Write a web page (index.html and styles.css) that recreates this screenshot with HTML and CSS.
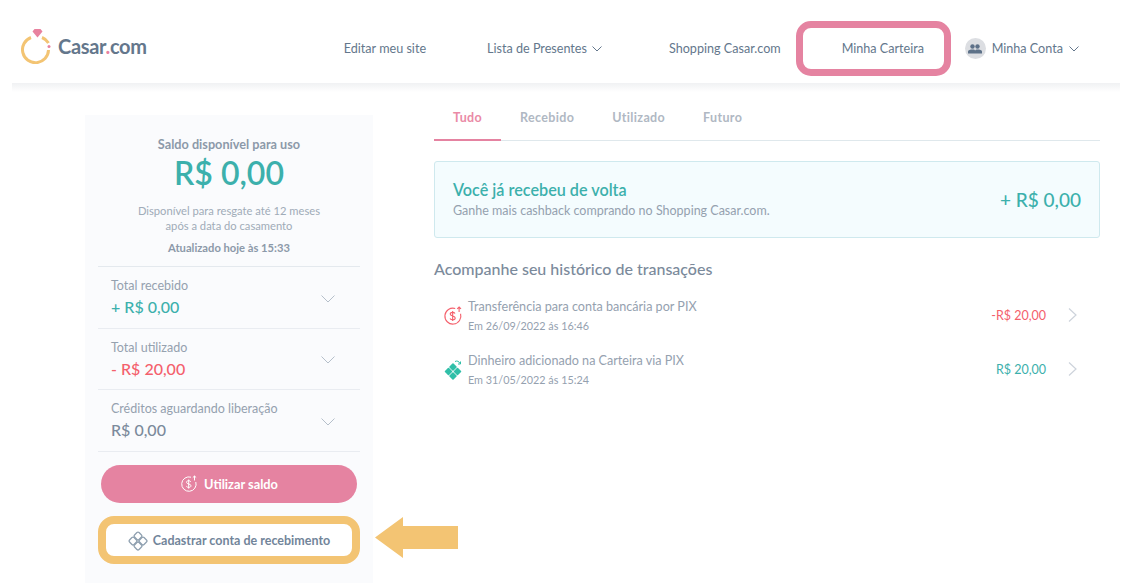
FILE: index.html
```html
<!DOCTYPE html>
<html lang="pt-BR">
  <head>
    <meta charset="UTF-8" />
    <title>Minha Carteira</title>
    <link rel="stylesheet" href="styles.css">
  </head>
  <body>
    <header class="topbar">
      <a class="logo">
        <svg width="32" height="36" viewBox="0 0 32 36">
          <path d="M10 9.5A13 13 0 1 0 27.5 22" fill="none" stroke="#f3c473" stroke-width="3" />
          <path d="M21 9.500A13 13 0 0 1 27.500 15" fill="none" stroke="#f3c473" stroke-width="3" />
          <path d="M11.500 3.500L13.500 1H19.500L21.500 3.500L16.500 9.500Z" fill="#e8829f" />
          <circle cx="28" cy="18.500" r="1.500" fill="#e8829f" />
        </svg>
        <span class="logo-text">Casar<i>.</i>com</span>
      </a>
      <nav class="nav">
        <a class="nav-link nav-edit">Editar meu site</a>
        <a class="nav-link nav-list">Lista de Presentes
          <svg class="chev-small" width="10" height="6" viewBox="0 0 10 6"><path d="M.5.5L5 5L9.500.5" /></svg>
        </a>
        <a class="nav-link nav-shop">Shopping Casar.com</a>
        <a class="nav-link nav-wallet">Minha Carteira</a>
        <a class="nav-link nav-account">
          <span class="avatar">
            <svg width="14" height="10" viewBox="0 0 14 10" fill="#5d7188">
              <circle cx="4.500" cy="2.500" r="2.200" />
              <circle cx="9.500" cy="2.500" r="2.200" />
              <path d="M0 9.500V7.500C0 6 2.500 5.500 4.500 5.500S7 6 7 6.500C7.500 6 8 5.500 9.500 5.500C11.500 5.500 14 6 14 7.500V9.500Z" />
            </svg>
          </span>
          Minha Conta
          <svg class="chev-small" width="10" height="6" viewBox="0 0 10 6"><path d="M.5.5L5 5L9.500.5" /></svg>
        </a>
      </nav>
    </header>

    <div class="content">
      <aside class="wallet">
        <div class="balance">
          <p class="balance-title">Saldo disponível para uso</p>
          <p class="balance-value">R$ 0,00</p>
          <p class="balance-note">Disponível para resgate até 12 meses<br />após a data do casamento</p>
          <p class="balance-update">Atualizado hoje às 15:33</p>
        </div>

        <div class="total-row">
          <div>
            <p class="total-label">Total recebido</p>
            <p class="total-value green">+ R$ 0,00</p>
          </div>
          <svg class="chev-big" width="14" height="8" viewBox="0 0 14 8"><path d="M.5.5L7 7L13.500.5" /></svg>
        </div>
        <div class="total-row">
          <div>
            <p class="total-label">Total utilizado</p>
            <p class="total-value red">- R$ 20,00</p>
          </div>
          <svg class="chev-big" width="14" height="8" viewBox="0 0 14 8"><path d="M.5.5L7 7L13.500.5" /></svg>
        </div>
        <div class="total-row">
          <div>
            <p class="total-label">Créditos aguardando liberação</p>
            <p class="total-value">R$ 0,00</p>
          </div>
          <svg class="chev-big" width="14" height="8" viewBox="0 0 14 8"><path d="M.5.5L7 7L13.500.5" /></svg>
        </div>

        <button class="btn-use">
          <svg width="18" height="18" viewBox="0 0 18 18" fill="none" stroke="#fff" stroke-width="1">
            <path d="M11 2.200A7.200 7.200 0 1 0 15.800 7" />
            <path d="M14.500 5.500V1M12.800 2.600L14.500 1L16.200 2.600" />
            <path d="M10.800 6.800C10.300 6 9.500 5.700 8.600 5.700C7.400 5.700 6.500 6.300 6.500 7.300C6.500 9.500 11 8.500 11 10.800C11 11.800 10 12.400 8.700 12.400C7.700 12.400 6.800 12 6.300 11.200M8.700 4.500V13.600" />
          </svg>
          Utilizar saldo
        </button>
        <button class="btn-account">
          <svg width="20" height="20" viewBox="0 0 20 20" fill="none" stroke="#8fa0b0" stroke-width="1.300">
            <rect x="6.800" y="1.800" width="6.400" height="6.400" rx="1.500" transform="rotate(45 10 5)" />
            <rect x="1.800" y="6.800" width="6.400" height="6.400" rx="1.500" transform="rotate(45 5 10)" />
            <rect x="11.800" y="6.800" width="6.400" height="6.400" rx="1.500" transform="rotate(45 15 10)" />
            <rect x="6.800" y="11.800" width="6.400" height="6.400" rx="1.500" transform="rotate(45 10 15)" />
          </svg>
          Cadastrar conta de recebimento
        </button>
        <svg class="arrow" width="83" height="41" viewBox="0 0 83 41">
          <path d="M0 20.500L28 0V9H83V32H28V41Z" fill="#f3c473" />
        </svg>
      </aside>

      <main class="history">
        <div class="tabs">
          <a class="tab active">Tudo</a>
          <a class="tab">Recebido</a>
          <a class="tab">Utilizado</a>
          <a class="tab">Futuro</a>
        </div>

        <section class="cashback">
          <div>
            <h2>Você já recebeu de volta</h2>
            <p>Ganhe mais cashback comprando no Shopping Casar.com.</p>
          </div>
          <span class="cashback-value">+ R$ 0,00</span>
        </section>

        <h3 class="history-title">Acompanhe seu histórico de transações</h3>

        <div class="transaction">
          <svg class="transaction-icon" width="20" height="20" viewBox="0 0 18 18" fill="none" stroke="#f4606c" stroke-width="1">
            <path d="M11 2.200A7.200 7.200 0 1 0 15.800 7" />
            <path d="M14.500 5.500V1M12.800 2.600L14.500 1L16.200 2.600" />
            <path d="M10.800 6.800C10.300 6 9.500 5.700 8.600 5.700C7.400 5.700 6.500 6.300 6.500 7.300C6.500 9.500 11 8.500 11 10.800C11 11.800 10 12.400 8.700 12.400C7.700 12.400 6.800 12 6.300 11.200M8.700 4.500V13.600" />
          </svg>
          <div class="transaction-text">
            <p class="transaction-name">Transferência para conta bancária por PIX</p>
            <p class="transaction-date">Em 26/09/2022 ás 16:46</p>
          </div>
          <span class="transaction-value red">-R$ 20,00</span>
          <svg class="chev-right" width="9" height="14" viewBox="0 0 9 14"><path d="M1 .5L8 7L1 13.500" /></svg>
        </div>

        <div class="transaction">
          <svg class="transaction-icon" width="20" height="20" viewBox="0 0 20 20" fill="#2fbfa8">
            <rect x="7.100" y="4.100" width="5.800" height="5.800" rx="0.800" transform="rotate(45 10 7)" />
            <rect x="2.600" y="8.600" width="5.800" height="5.800" rx="0.800" transform="rotate(45 5.500 11.500)" />
            <rect x="11.600" y="8.600" width="5.800" height="5.800" rx="0.800" transform="rotate(45 14.500 11.500)" />
            <rect x="7.100" y="13.100" width="5.800" height="5.800" rx="0.800" transform="rotate(45 10 16)" />
            <path d="M12 1.500C14 .5 16 1.200 17 3.500M17.500 1.500V4H15" fill="none" stroke="#2fbfa8" stroke-width="1" />
          </svg>
          <div class="transaction-text">
            <p class="transaction-name">Dinheiro adicionado na Carteira via PIX</p>
            <p class="transaction-date">Em 31/05/2022 ás 15:24</p>
          </div>
          <span class="transaction-value green">R$ 20,00</span>
          <svg class="chev-right" width="9" height="14" viewBox="0 0 9 14"><path d="M1 .5L8 7L1 13.500" /></svg>
        </div>
      </main>
    </div>
  </body>
</html>
```

FILE: styles.css
```css
* {
  margin: 0;
  padding: 0;
  box-sizing: border-box;
}
html,
body {
  height: 583px;
  overflow: hidden;
}
body {
  font-family: "Lato", sans-serif;
  background: #fff;
  color: #64778c;
}
p {
  line-height: 1.2;
}

/* header */
.topbar {
  position: relative;
  height: 83px;
  margin: 0 16px 0 12px;
  padding-left: 9px;
  display: flex;
  align-items: center;
}
.topbar::after {
  content: "";
  position: absolute;
  left: 0;
  right: 0;
  top: 100%;
  height: 9px;
  background: linear-gradient(#f0f1f3, #fff);
}
.logo {
  display: flex;
  align-items: center;
  gap: 5px;
  margin-top: 8px;
}
.logo-text {
  font-size: 20px;
  font-weight: 700;
  letter-spacing: -0.3px;
  color: #64778c;
}
.logo-text i {
  font-style: normal;
  color: #e8829f;
}
.nav {
  display: flex;
  align-items: center;
  margin-left: 197px;
  margin-top: 14px;
  font-size: 12.600px;
  color: #64778c;
}
.nav-link {
  display: flex;
  align-items: center;
  white-space: nowrap;
}
.nav-list {
  margin-left: 61px;
  gap: 5px;
}
.nav-shop {
  margin-left: 67px;
}
.nav-wallet {
  margin-left: 15px;
  width: 155px;
  height: 55px;
  padding-left: 39px;
  border: 7px solid #e583a1;
  border-radius: 15px;
}
.nav-account {
  margin-left: 14px;
  gap: 6px;
}
.avatar {
  width: 21px;
  height: 21px;
  border-radius: 50%;
  background: #dcdee2;
  display: flex;
  align-items: center;
  justify-content: center;
}
.chev-small {
  fill: none;
  stroke: #64778c;
  stroke-width: 1;
}

/* page */
.content {
  display: flex;
  padding: 32px 36px 0 85px;
  gap: 61px;
}

/* left column */
.wallet {
  position: relative;
  flex: 0 0 288px;
  height: 468px;
  padding: 0 13px;
  background: #fafbfd;
}
.balance {
  height: 152px;
  padding-top: 22px;
  text-align: center;
  border-bottom: 1px solid #e4e9ee;
}
.balance-title {
  font-size: 12.700px;
  font-weight: 700;
  color: #8c99a9;
}
.balance-value {
  font-size: 32px;
  font-weight: 600;
  color: #3cb0ac;
  margin-top: 2px;
}
.balance-note {
  font-size: 11.200px;
  line-height: 15.500px;
  color: #a0abb8;
  margin-top: 10px;
}
.balance-update {
  font-size: 11.200px;
  font-weight: 700;
  color: #8c99a9;
  margin-top: 7px;
}
.total-row {
  height: 61.600px;
  padding: 11px 25px 0 13px;
  display: flex;
  justify-content: space-between;
  align-items: center;
  border-bottom: 1px solid #e9ecf1;
}
.total-row > div {
  align-self: flex-start;
}
.total-row .chev-big {
  margin-top: -8px;
}
.total-label {
  font-size: 12.500px;
  color: #95a1af;
}
.total-value {
  font-size: 16px;
  font-weight: 500;
  color: #7b8a9b;
  margin-top: 4px;
}
.total-value.green {
  color: #3cb0ac;
}
.total-value.red {
  color: #f4606c;
}
.green {
  color: #3cb0ac;
}
.red {
  color: #f4606c;
}
.chev-big {
  fill: none;
  stroke: #b5bfca;
  stroke-width: 1;
}
.btn-use,
.btn-account {
  font-family: inherit;
  display: flex;
  align-items: center;
  justify-content: center;
  font-weight: 700;
  cursor: pointer;
}
.btn-use {
  width: 256px;
  height: 38px;
  margin: 13px 0 13px 3px;
  gap: 6px;
  font-size: 12.800px;
  color: #fff;
  background: #e583a1;
  border: none;
  border-radius: 19px;
}
.btn-account {
  width: 262px;
  height: 48px;
  padding-top: 2px;
  gap: 5px;
  font-size: 12.500px;
  color: #72859a;
  background: #fff;
  border: 8px solid #f3c473;
  border-radius: 16px;
}
.arrow {
  position: absolute;
  left: 290px;
  top: 402px;
}

/* right column */
.history {
  flex: 1;
}
.tabs {
  display: flex;
  height: 32px;
  margin-top: -6px;
  border-bottom: 1px solid #dfe8ec;
}
.tab {
  height: 32px;
  padding: 0 19px;
  font-size: 12.500px;
  letter-spacing: 0.35px;
  font-weight: 700;
  color: #b0b8c3;
  line-height: 17px;
}
.tab.active {
  color: #ea8aa6;
  border-bottom: 2px solid #e583a1;
}
.cashback {
  height: 77px;
  margin-top: 20px;
  padding: 0 18px 0 18px;
  display: flex;
  justify-content: space-between;
  align-items: center;
  background: #f4fcfe;
  border: 1px solid #cfe9ee;
  border-radius: 3px;
}
.cashback h2 {
  font-size: 16.200px;
  font-weight: 600;
  color: #3cb0ac;
  line-height: 20px;
  margin: -1px 0 3px;
}
.cashback p {
  font-size: 12.500px;
  color: #95a1af;
}
.cashback-value {
  font-size: 19px;
  font-weight: 500;
  color: #3cb0ac;
}
.history-title {
  margin-top: 21px;
  font-size: 16px;
  font-weight: 500;
  color: #7b8a9b;
  line-height: 20px;
}
.transaction {
  height: 54px;
  padding: 0 23px 0 9px;
  display: flex;
  align-items: center;
}
.history-title + .transaction {
  margin-top: 9px;
}
.transaction-icon {
  margin-right: 5px;
  flex: none;
  margin-top: 2px;
}
.transaction-text {
  flex: 1;
  padding-top: 2px;
}
.transaction-name {
  font-size: 12.600px;
  color: #95a1af;
}
.transaction-date {
  font-size: 10.800px;
  color: #95a1af;
  margin-top: 6px;
}
.transaction-value {
  font-size: 12.500px;
  margin-right: 22px;
}
.chev-right {
  fill: none;
  stroke: #cdd3db;
  stroke-width: 1.200;
}
```
